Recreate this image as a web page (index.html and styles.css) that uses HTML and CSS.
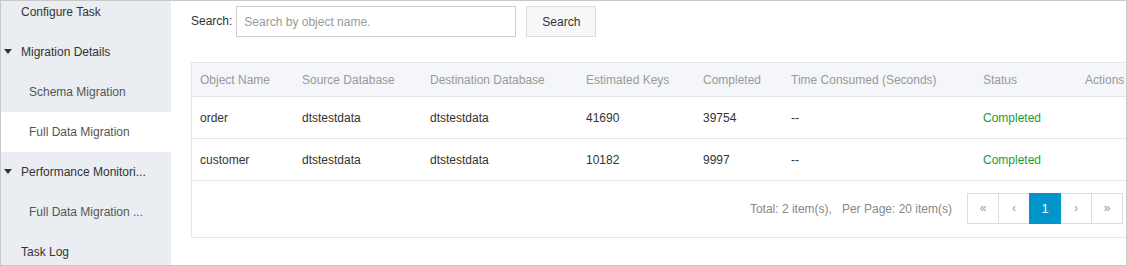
FILE: index.html
```html
<!DOCTYPE html>
<html>
<head>
<meta charset="utf-8">
<link rel="stylesheet" href="styles.css">
</head>
<body>
<div class="app">
  <aside class="sidebar">
    <ul class="nav">
      <li class="nav-item">Configure Task</li>
      <li class="nav-item nav-group"><span class="caret"></span>Migration Details</li>
      <li class="nav-item nav-sub">Schema Migration</li>
      <li class="nav-item nav-sub active">Full Data Migration</li>
      <li class="nav-item nav-group"><span class="caret"></span>Performance Monitori...</li>
      <li class="nav-item nav-sub">Full Data Migration ...</li>
      <li class="nav-item">Task Log</li>
    </ul>
  </aside>
  <main class="main">
    <div class="search-row">
      <label class="search-label">Search:</label>
      <input class="search-input" type="text" placeholder="Search by object name.">
      <button class="search-btn">Search</button>
    </div>
    <div class="table-box">
      <table class="grid">
        <colgroup>
          <col class="c1"><col class="c2"><col class="c3"><col class="c4"><col class="c5"><col class="c6"><col class="c7"><col class="c8">
        </colgroup>
        <thead>
          <tr>
            <th>Object Name</th><th>Source Database</th><th>Destination Database</th><th>Estimated Keys</th><th>Completed</th><th>Time Consumed (Seconds)</th><th>Status</th><th>Actions</th>
          </tr>
        </thead>
        <tbody>
          <tr>
            <td>order</td><td>dtstestdata</td><td>dtstestdata</td><td>41690</td><td>39754</td><td>--</td><td class="ok">Completed</td><td></td>
          </tr>
          <tr>
            <td>customer</td><td>dtstestdata</td><td>dtstestdata</td><td>10182</td><td>9997</td><td>--</td><td class="ok">Completed</td><td></td>
          </tr>
        </tbody>
      </table>
      <div class="footer">
        <span class="total">Total: 2 item(s),&nbsp;&nbsp;&nbsp;Per Page: 20 item(s)</span>
        <div class="pager">
          <span class="pg">&laquo;</span>
          <span class="pg">&lsaquo;</span>
          <span class="pg current">1</span>
          <span class="pg">&rsaquo;</span>
          <span class="pg">&raquo;</span>
        </div>
      </div>
    </div>
  </main>
</div>
</body>
</html>
```

FILE: styles.css
```css
* { box-sizing: border-box; }
html, body { margin: 0; padding: 0; background: #fff; }
body { font-family: "Liberation Sans", Arial, sans-serif; font-size: 12px; color: #333; }

.app {
  width: 1127px;
  height: 266px;
  border: 1px solid #c8c8c8;
  display: flex;
  overflow: hidden;
}

.sidebar {
  width: 170px;
  flex: none;
  background: #eaedf1;
  overflow: hidden;
}
.nav { list-style: none; margin: -9px 0 0 0; padding: 0; }
.nav-item {
  height: 40px;
  line-height: 40px;
  padding-left: 20px;
  color: #333;
  white-space: nowrap;
  position: relative;
}
.nav-sub { padding-left: 28px; color: #555; }
.nav-item.active { background: #fff; }
.caret {
  position: absolute;
  left: 3px;
  top: 17px;
  width: 0; height: 0;
  border-left: 4px solid transparent;
  border-right: 4px solid transparent;
  border-top: 5px solid #333;
}

.main {
  flex: 1;
  min-width: 0;
  padding: 5px 0 0 20px;
  overflow: hidden;
}

.search-row { display: flex; align-items: center; height: 31px; }
.search-label { color: #333; margin-right: 4px; position: relative; top: -1px; }
.search-input {
  width: 280px; height: 31px;
  border: 1px solid #ccc;
  padding: 0 7px;
  font-family: inherit; font-size: 12px; color: #333;
  outline: none;
}
.search-input::placeholder { color: #999; }
.search-btn {
  margin-left: 10px;
  width: 70px; height: 31px;
  background: #f7f7f7;
  border: 1px solid #ddd;
  font-family: inherit; font-size: 12px; color: #333;
  padding: 0;
}

.table-box {
  margin-top: 25px;
  width: 942px;
  border: 1px solid #e3e6eb;
}
.grid { width: 100%; border-collapse: collapse; table-layout: fixed; }
.c1 { width: 102px; } .c2 { width: 128px; } .c3 { width: 156px; } .c4 { width: 117px; }
.c5 { width: 88px; } .c6 { width: 192px; } .c7 { width: 102px; } .c8 { width: 55px; }
.grid th {
  height: 33px;
  background: #f4f6fa;
  color: #999;
  font-weight: normal;
  text-align: left;
  padding: 2px 0 0 8px;
  white-space: nowrap;
  border-bottom: 1px solid #e3e6eb;
}
.grid td {
  height: 42px;
  padding: 2px 0 0 8px;
  border-bottom: 1px solid #e3e6eb;
  white-space: nowrap;
  color: #333;
}
.grid td.ok { color: #1a9b37; }

.footer {
  height: 56px;
  display: flex;
  align-items: center;
  justify-content: flex-end;
  padding-right: 9px;
}
.total { color: #888; margin-right: 16px; }
.pager { display: flex; }
.pg {
  width: 32px; height: 31px;
  line-height: 29px;
  text-align: center;
  border: 1px solid #ddd;
  margin-left: -1px;
  color: #999;
  background: #fff;
  font-size: 12px;
}
.pg.current { background: #0096cc; border-color: #0096cc; color: #fff; font-size: 13px; position: relative; }
```
